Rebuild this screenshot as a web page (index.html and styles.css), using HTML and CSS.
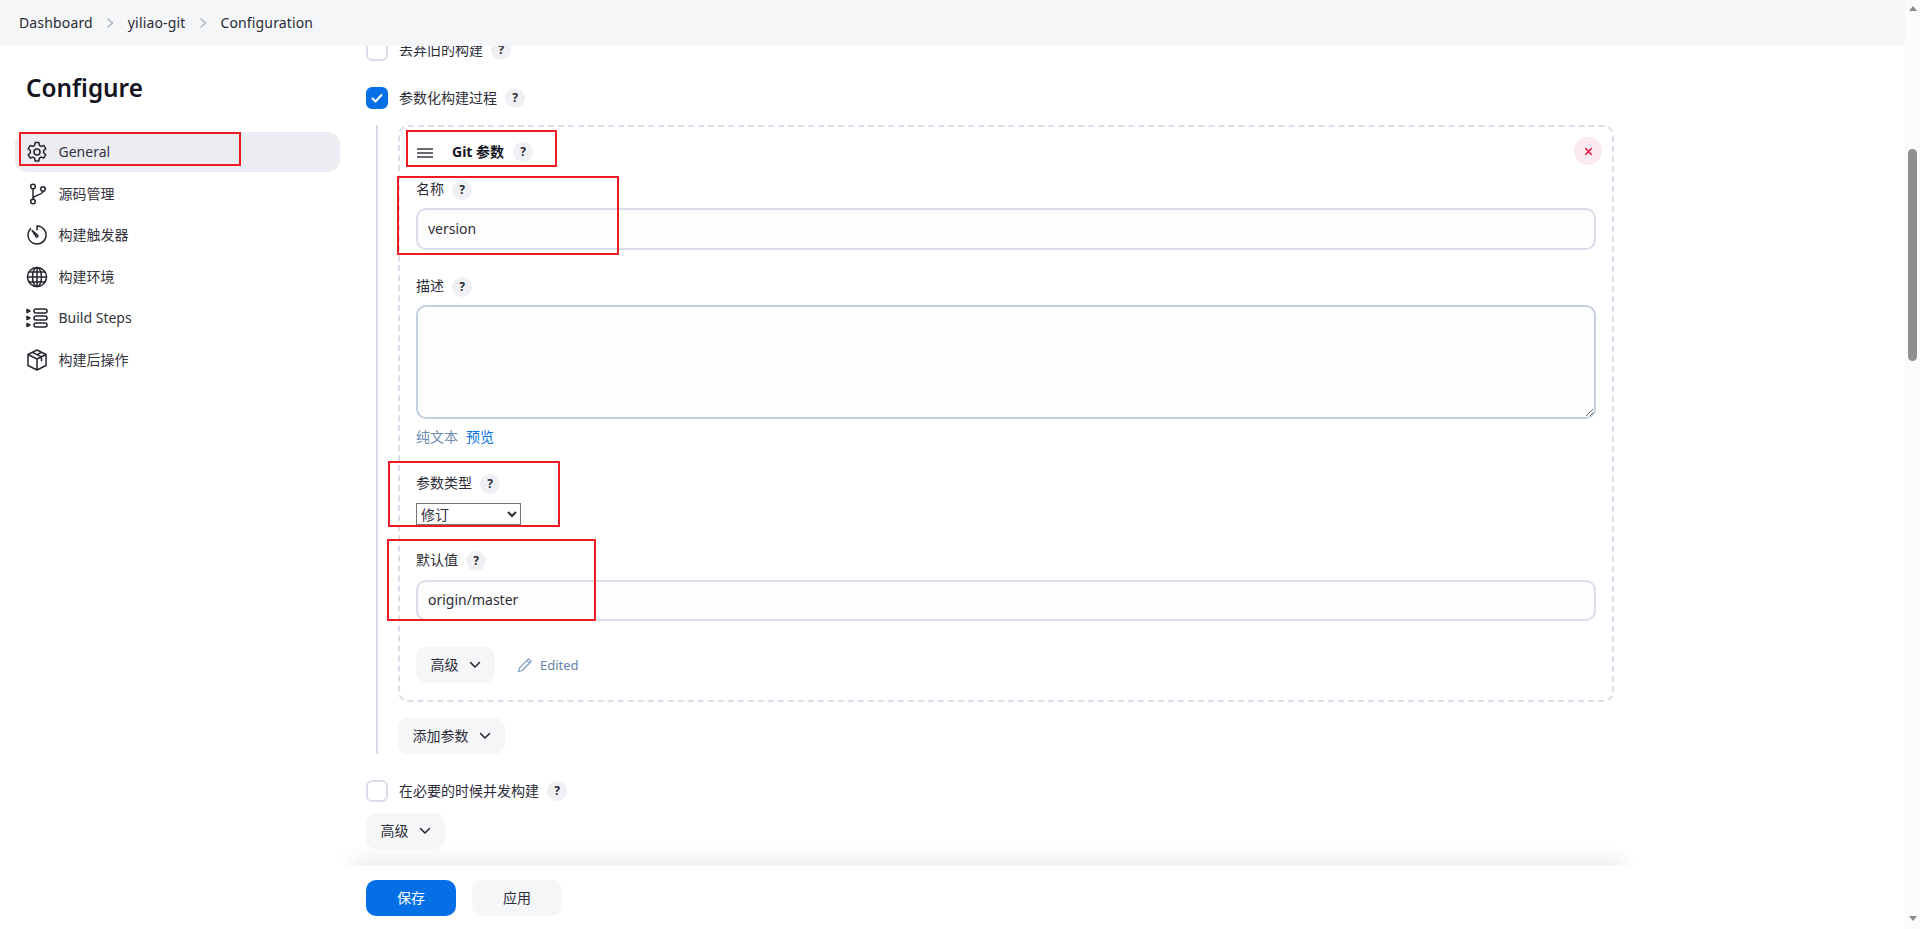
FILE: index.html
```html
<!DOCTYPE html>
<html lang="zh-CN">
<head>
<meta charset="utf-8">
<title>yiliao-git Configuration</title>
<link rel="stylesheet" href="styles.css">
</head>
<body>
<div class="page">
  <header class="crumbs">
    <a class="crumb">Dashboard</a>
    <svg class="sep" viewBox="0 0 8 12"><path d="M1.500 1.500 6.500 6l-5 4.500"/></svg>
    <a class="crumb">yiliao-git</a>
    <svg class="sep" viewBox="0 0 8 12"><path d="M1.500 1.500 6.500 6l-5 4.500"/></svg>
    <a class="crumb">Configuration</a>
  </header>

  <div class="body-row">
    <aside class="side">
      <h1 class="title">Configure</h1>
      <nav class="nav">
        <a class="nav-item active">
          <svg class="ico" viewBox="0 0 24 24"><path d="M13.900 2.600h-3.800l-.6 2.900c-.6.200-1.100.500-1.600.900l-2.800-.9-1.900 3.300 2.200 2c-.1.600-.1 1.300 0 1.900l-2.200 2 1.900 3.300 2.800-.9c.500.400 1 .700 1.600.900l.6 2.900h3.800l.6-2.900c.6-.2 1.100-.5 1.600-.9l2.800.9 1.900-3.300-2.200-2c.1-.6.1-1.300 0-1.900l2.200-2-1.900-3.300-2.800.9c-.5-.4-1-.7-1.600-.9z"/><circle cx="12" cy="12" r="3"/></svg>
          <span>General</span>
        </a>
        <a class="nav-item">
          <svg class="ico" viewBox="0 0 24 24"><circle cx="8" cy="4.500" r="2.300"/><circle cx="8" cy="19.500" r="2.300"/><circle cx="18" cy="7" r="2.300"/><path d="M8 6.800v10.400M18 9.300c0 4-10 3.200-10 8"/></svg>
          <span>源码管理</span>
        </a>
        <a class="nav-item">
          <svg class="ico" viewBox="0 0 24 24"><path d="M12 3a9 9 0 1 1-6.400 2.700M12 3v3.800M7.200 7.500l5.500 4.900a1 1 0 0 1-1.400 1.400z"/></svg>
          <span>构建触发器</span>
        </a>
        <a class="nav-item">
          <svg class="ico" viewBox="0 0 24 24"><circle cx="12" cy="12" r="9.500"/><ellipse cx="12" cy="12" rx="4.500" ry="9.500"/><path d="M12 2.500v19M2.500 12h19M4 7h16M4 17h16"/></svg>
          <span>构建环境</span>
        </a>
        <a class="nav-item">
          <svg class="ico" viewBox="0 0 24 24"><rect x="9" y="3" width="13" height="4" rx="2"/><rect x="9" y="10" width="13" height="4" rx="2"/><rect x="9" y="17" width="13" height="4" rx="2"/><path d="M2 3.500 5 5 2 6.500zM2 10.500 5 12 2 13.500zM2 17.500 5 19 2 20.500z"/></svg>
          <span>Build Steps</span>
        </a>
        <a class="nav-item">
          <svg class="ico" viewBox="0 0 24 24"><path d="M12 2 3 6.500v11L12 22l9-4.500v-11zM3 6.500 12 11l9-4.500M12 11v11M7.500 4.300l9 4.500v4M16.500 4.300l-4.500 2.300"/></svg>
          <span>构建后操作</span>
        </a>
      </nav>
    </aside>

    <main class="main">
      <label class="check-row">
        <span class="box"></span><span class="check-label">丢弃旧的构建</span><span class="help">?</span>
      </label>
      <label class="check-row param-row">
        <span class="box on"><svg viewBox="0 0 22 22"><path d="M6.500 11.500 9.500 14.500 15.500 8"/></svg></span><span class="check-label">参数化构建过程</span><span class="help">?</span>
      </label>

      <section class="nested">
        <div class="card">
          <div class="card-head">
            <svg class="grip" viewBox="0 0 16 10"><path d="M0 1h16M0 5h16M0 9h16"/></svg>
            <strong class="card-title">Git 参数</strong><span class="help">?</span>
            <button class="close" type="button"><svg viewBox="0 0 10 10"><path d="M1.500 1.500l7 7M8.500 1.500l-7 7"/></svg></button>
          </div>

          <div class="field-label first"><span class="label-text">名称</span><span class="help">?</span></div>
          <input class="text-input gap8" type="text" value="version">

          <div class="field-label"><span class="label-text">描述</span><span class="help">?</span></div>
          <textarea class="text-area gap8"></textarea>
          <div class="hint"><a class="plain">纯文本</a><a class="preview">预览</a></div>

          <div class="field-label"><span class="label-text">参数类型</span><span class="help">?</span></div>
          <select class="native gap9"><option>修订</option></select>

          <div class="field-label tight"><span class="label-text">默认值</span><span class="help">?</span></div>
          <input class="text-input short gap9" type="text" value="origin/master">

          <div class="adv-row">
            <button class="btn" type="button">高级<svg class="chev" viewBox="0 0 12 8"><path d="M1.500 1.500 6 6l4.500-4.500"/></svg></button>
            <svg class="pencil" viewBox="0 0 16 16"><path d="M11.500 1.800 14.200 4.500 5.200 13.500 1.500 14.500 2.500 10.800zM9.800 3.500l2.700 2.700"/></svg>
            <span class="edited">Edited</span>
          </div>
        </div>
        <button class="btn add" type="button">添加参数<svg class="chev" viewBox="0 0 12 8"><path d="M1.500 1.500 6 6l4.500-4.500"/></svg></button>
      </section>

      <label class="check-row concurrent">
        <span class="box"></span><span class="check-label">在必要的时候并发构建</span><span class="help">?</span>
      </label>
      <button class="btn adv-main" type="button">高级<svg class="chev" viewBox="0 0 12 8"><path d="M1.500 1.500 6 6l4.500-4.500"/></svg></button>
    </main>
  </div>

  <footer class="bar">
    <div class="bar-shade"></div>
    <button class="btn-save" type="button">保存</button>
    <button class="btn-apply" type="button">应用</button>
  </footer>

  <div class="mark mark-general"></div>
  <div class="mark mark-git"></div>
  <div class="mark mark-name"></div>
  <div class="mark mark-type"></div>
  <div class="mark mark-default"></div>
</div>

<div class="scrollbar">
  <span class="arrow up"></span>
  <div class="track"><div class="thumb"></div></div>
  <span class="arrow down"></span>
</div>
</body>
</html>
```

FILE: styles.css
```css
* { box-sizing: border-box; }
html, body { margin: 0; height: 929px; overflow: hidden; }
body {
  display: flex;
  background: #fff;
  color: #14141f;
  font-family: "Noto Sans", "Noto Sans CJK SC", sans-serif;
  font-size: 14px;
  line-height: 20px;
}
.page { position: relative; flex: 1; min-width: 0; display: flex; flex-direction: column; height: 929px; overflow: hidden; }

/* breadcrumb */
.crumbs {
  position: relative;
  z-index: 2;
  flex: none;
  height: 46px;
  display: flex;
  align-items: center;
  padding: 0 0 1px 19px;
  background: #f5f6f8;
  color: #2a2a35;
  letter-spacing: .15px;
}
.crumb { display: block; }
.sep { width: 8px; height: 12px; margin: 0 13.500px 0 13.500px; fill: none; stroke: #a3b1c6; stroke-width: 1.300; }

.body-row { display: flex; flex: 1; min-height: 0; }

/* sidebar */
.side { flex: none; width: 366px; padding: 0 26px 0 15px; }
.title {
  margin: 25px 0 27px 11px;
  font-size: 24.300px;
  line-height: 34px;
  font-weight: 600;
  color: #14141f;
}
.nav { display: flex; flex-direction: column; gap: 1.600px; }
.nav-item {
  height: 40px;
  display: flex;
  align-items: center;
  gap: 9.500px;
  padding-left: 10px;
  border-radius: 12px;
  color: #33333d;
}
.nav-item.active { background: #ecedf3; }
.ico { flex: none; width: 24px; height: 24px; fill: none; stroke: #24242e; stroke-width: 1.500; stroke-linejoin: round; stroke-linecap: round; }

/* main column */
.main { flex: none; width: 1248px; margin-top: -7px; }
.check-row { display: flex; align-items: center; height: 22px; }
.box {
  flex: none;
  width: 22px;
  height: 22px;
  margin-right: 11px;
  border: 2px solid #d8dee9;
  border-radius: 6px;
  background: #fff;
}
.box.on { background: #0570e6; border-color: #0570e6; position: relative; }
.box.on svg { display: block; width: 22px; height: 22px; margin: -2px; fill: none; stroke: #fff; stroke-width: 2; stroke-linecap: round; stroke-linejoin: round; }
.check-label { color: #2d2d38; }
.help {
  flex: none;
  display: inline-block;
  width: 20px;
  height: 20px;
  margin-left: 8px;
  border-radius: 50%;
  background: #eef0f4;
  color: #2a2a35;
  font-size: 12px;
  font-weight: 700;
  line-height: 20px;
  text-align: center;
}
.param-row { margin-top: 26px; }

.nested {
  margin: 16px 0 0 10px;
  padding-left: 20px;
  border-left: 2px solid #d5dbe7;
}
.card {
  width: 1216px;
  height: 577px;
  padding: 0 16px 0 16px;
  border: 2px dashed #d8deea;
  border-radius: 10px;
}
.card-head { position: relative; display: flex; align-items: center; height: 50px; }
.grip { width: 16px; height: 10px; margin: 1px 19px 0 1px; fill: none; stroke: #3a3a45; stroke-width: 1.600; }
.card-title { font-weight: 700; }
.card-head .help { margin-left: 9px; }
.close {
  position: absolute;
  top: 10px;
  right: -6px;
  width: 28px;
  height: 28px;
  padding: 0;
  display: flex;
  align-items: center;
  justify-content: center;
  border: 0;
  border-radius: 50%;
  background: #fbebee;
}
.close svg { width: 9px; height: 9px; fill: none; stroke: #e6003c; stroke-width: 1.500; }

.field-label { display: flex; align-items: center; height: 20px; margin-top: 27px; color: #2d2d38; }
.label-text { margin-bottom: 2px; }
.field-label.first { margin-top: 3px; }
.field-label.tight { margin-top: 26px; }
.gap8 { margin-top: 8px; }
.gap9 { margin-top: 9px; }
.text-input, .text-area {
  display: block;
  width: 100%;
  border: 2px solid #d8deea;
  border-radius: 10px;
  background: #fdfdfe;
  color: #2d2d38;
  font: inherit;
  outline: 0;
}
.text-input { height: 42px; padding: 0 10px 2px; }
.text-input.short { height: 41px; }
.text-area { height: 114px; border-color: #c3cede; }
.hint { display: flex; gap: 8px; height: 20px; margin-top: 8px; }
.plain { color: #6d8cb0; }
.preview { color: #0570e6; }
.native {
  display: block;
  width: 105px;
  height: 22px;
  padding: 0 0 2px;
  background: #fff;
  color: #2d2d38;
  font: inherit;
  line-height: 20px;
}

.btn {
  display: inline-flex;
  align-items: center;
  justify-content: center;
  height: 36px;
  padding: 0;
  border: 0;
  border-radius: 10px;
  background: #f5f6f8;
  color: #2d2d38;
  font: inherit;
}
.chev { width: 12px; height: 8px; margin-left: 10px; fill: none; stroke: #22222c; stroke-width: 1.500; stroke-linecap: round; stroke-linejoin: round; }
.adv-row { display: flex; align-items: center; margin-top: 26px; }
.adv-row .btn { width: 79px; }
.pencil { width: 16px; height: 16px; margin-left: 22px; fill: none; stroke: #7f9cc0; stroke-width: 1.200; stroke-linejoin: round; }
.edited { margin-left: 7px; color: #6583ab; font-size: 13px; }
.btn.add { display: flex; width: 107px; margin-top: 16px; }
.concurrent { margin-top: 26px; }
.btn.adv-main { display: flex; width: 79px; margin-top: 11px; }

/* sticky footer */
.bar {
  position: absolute;
  left: 0;
  right: 0;
  bottom: 0;
  height: 63px;
  padding: 14px 0 0 366px;
  display: flex;
  gap: 16px;
  align-items: flex-start;
  background: #fff;
  z-index: 1;
}
.bar-shade {
  position: absolute;
  top: -21px;
  left: 340px;
  width: 1295px;
  height: 21px;
  background: linear-gradient(rgba(241, 241, 243, 0), #f1f1f3);
  -webkit-mask-image: linear-gradient(90deg, transparent, #000 26px, #000 1270px, transparent);
  mask-image: linear-gradient(90deg, transparent, #000 26px, #000 1270px, transparent);
}
.btn-save, .btn-apply {
  width: 90px;
  height: 36px;
  border: 0;
  border-radius: 10px;
  font: inherit;
}
.btn-save { background: #0570e6; color: #fff; }
.btn-apply { background: #f5f6f8; color: #2d2d38; }

/* red annotation rectangles over the screenshot */
.mark { position: absolute; z-index: 3; border: 2px solid #ed1c24; }
.mark-general { left: 19px; top: 132px; width: 222px; height: 34px; }
.mark-git { left: 406px; top: 130px; width: 151px; height: 37px; }
.mark-name { left: 397px; top: 176px; width: 222px; height: 79px; }
.mark-type { left: 388px; top: 461px; width: 172px; height: 66px; }
.mark-default { left: 387px; top: 539px; width: 209px; height: 82px; }

/* scrollbar */
.scrollbar { flex: none; width: 15px; height: 929px; background: #fbfbfb; display: flex; flex-direction: column; align-items: center; }
.track { flex: 1; width: 100%; position: relative; }
.thumb { position: absolute; left: 3px; top: 133px; width: 9px; height: 212px; border-radius: 5px; background: #8f8f8f; }
.arrow { flex: none; display: block; width: 0; height: 0; border-left: 4.500px solid transparent; border-right: 4.500px solid transparent; }
.arrow.up { margin: 6px 0 5px; border-bottom: 5px solid #8a8a8a; }
.arrow.down { margin: 5px 0 8px; border-top: 5px solid #8a8a8a; }
```
